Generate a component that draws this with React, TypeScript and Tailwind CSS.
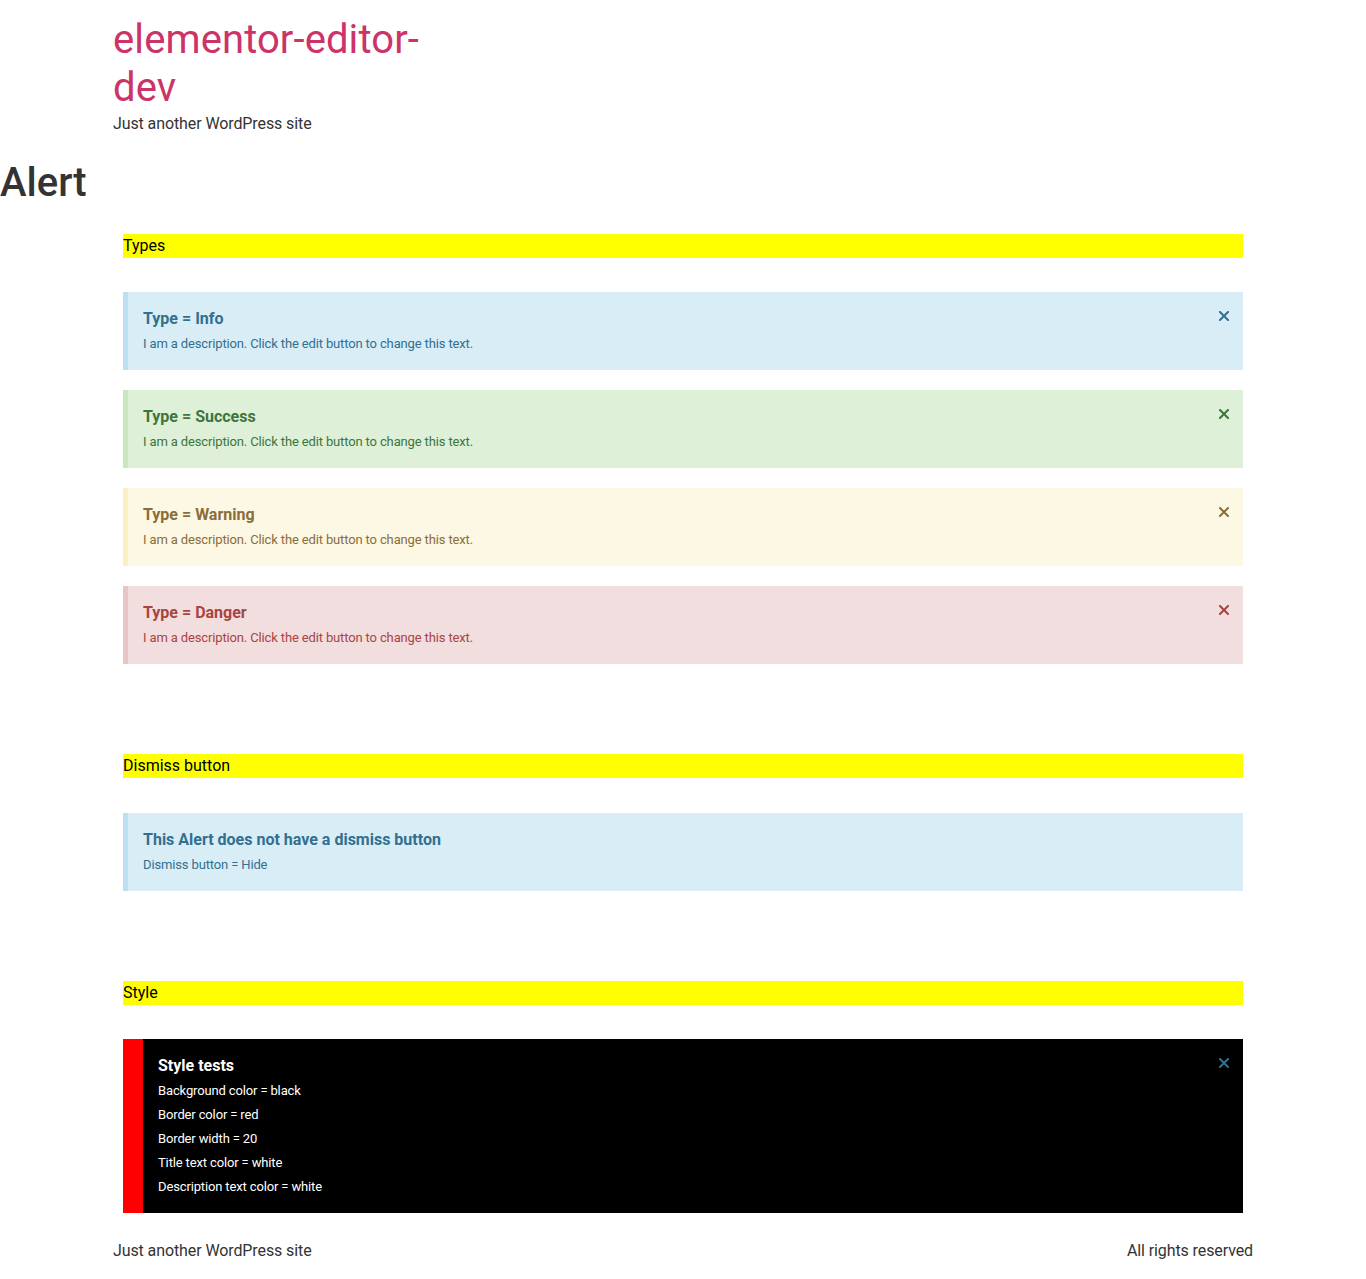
import React from 'react';

interface AlertProps {
  title: string;
  lines: string[];
  tone: 'info' | 'success' | 'warning' | 'danger' | 'custom';
  dismiss?: boolean;
}

const tones = {
  info: 'bg-[#d9edf7] border-[#bcdff1] text-[#31708f]',
  success: 'bg-[#dff0d8] border-[#cae6be] text-[#3c763d]',
  warning: 'bg-[#fcf8e3] border-[#f9f0c3] text-[#8a6d3b]',
  danger: 'bg-[#f2dede] border-[#e8c4c4] text-[#a94442]',
  custom: 'bg-black border-[#ff0000] text-white',
};

function CloseIcon({ color }: { color: string }) {
  return (
    <svg width="10" height="10" viewBox="0 0 10 10" className={color} aria-hidden="true">
      <path d="M1 1 L9 9 M9 1 L1 9" stroke="currentColor" strokeWidth="2" strokeLinecap="square" />
    </svg>
  );
}

function Alert({ title, lines, tone, dismiss = true }: AlertProps) {
  const isCustom = tone === 'custom';
  return (
    <div
      className={`relative ${tones[tone]} ${isCustom ? 'border-l-[20px]' : 'border-l-[5px]'} pl-[15px] pr-[15px] pt-[16px] pb-[14px]`}
    >
      <div className="text-[16px] leading-[22px] font-bold">{title}</div>
      <div className="mt-[2px] text-[13px] leading-[24px] tracking-[-0.14px]">
        {lines.map((l) => (
          <div key={l}>{l}</div>
        ))}
      </div>
      {dismiss && (
        <button className="absolute right-[14px] top-[19px] flex items-center justify-center w-[10px] h-[10px]">
          <CloseIcon color={isCustom ? 'text-[#31708f]' : ''} />
        </button>
      )}
    </div>
  );
}

function SectionHeading({ label }: { label: string }) {
  return <div className="bg-[#ffff00] text-black text-[16px] leading-[24px]">{label}</div>;
}

const desc = 'I am a description. Click the edit button to change this text.';

export default function App() {
  return (
    <div className="min-h-[1279px] bg-white text-[#333333]" style={{ fontFamily: 'Roboto, "Noto Sans", sans-serif' }}>
      {/* Header */}
      <header className="w-[1140px] mx-auto pt-[16px]">
        <div className="w-[340px] text-[40px] leading-[48px] text-[#cc3366] tracking-[0.1px]">elementor-editor-dev</div>
        <p className="text-[16px] leading-[24px] text-[#333333] tracking-[-0.1px]">Just another WordPress site</p>
      </header>

      <h1 className="mt-[23px] text-[40px] leading-[48px] font-medium text-[#333333]">Alert</h1>

      <main className="w-[1120px] mx-auto mt-[27px]">
        <SectionHeading label="Types" />
        <div className="mt-[34px] flex flex-col gap-[20px]">
          <Alert tone="info" title="Type = Info" lines={[desc]} />
          <Alert tone="success" title="Type = Success" lines={[desc]} />
          <Alert tone="warning" title="Type = Warning" lines={[desc]} />
          <Alert tone="danger" title="Type = Danger" lines={[desc]} />
        </div>

        <div className="mt-[90px]">
          <SectionHeading label="Dismiss button" />
        </div>
        <div className="mt-[35px]">
          <Alert tone="info" title="This Alert does not have a dismiss button" lines={['Dismiss button = Hide']} dismiss={false} />
        </div>

        <div className="mt-[90px]">
          <SectionHeading label="Style" />
        </div>
        <div className="mt-[34px]">
          <Alert
            tone="custom"
            title="Style tests"
            lines={[
              'Background color = black',
              'Border color = red',
              'Border width = 20',
              'Title text color = white',
              'Description text color = white',
            ]}
          />
        </div>
      </main>

      {/* Footer */}
      <footer className="w-[1140px] mx-auto mt-[26px] flex justify-between text-[16px] leading-[24px] text-[#333333] tracking-[-0.1px]">
        <span>Just another WordPress site</span>
        <span>All rights reserved</span>
      </footer>
    </div>
  );
}
